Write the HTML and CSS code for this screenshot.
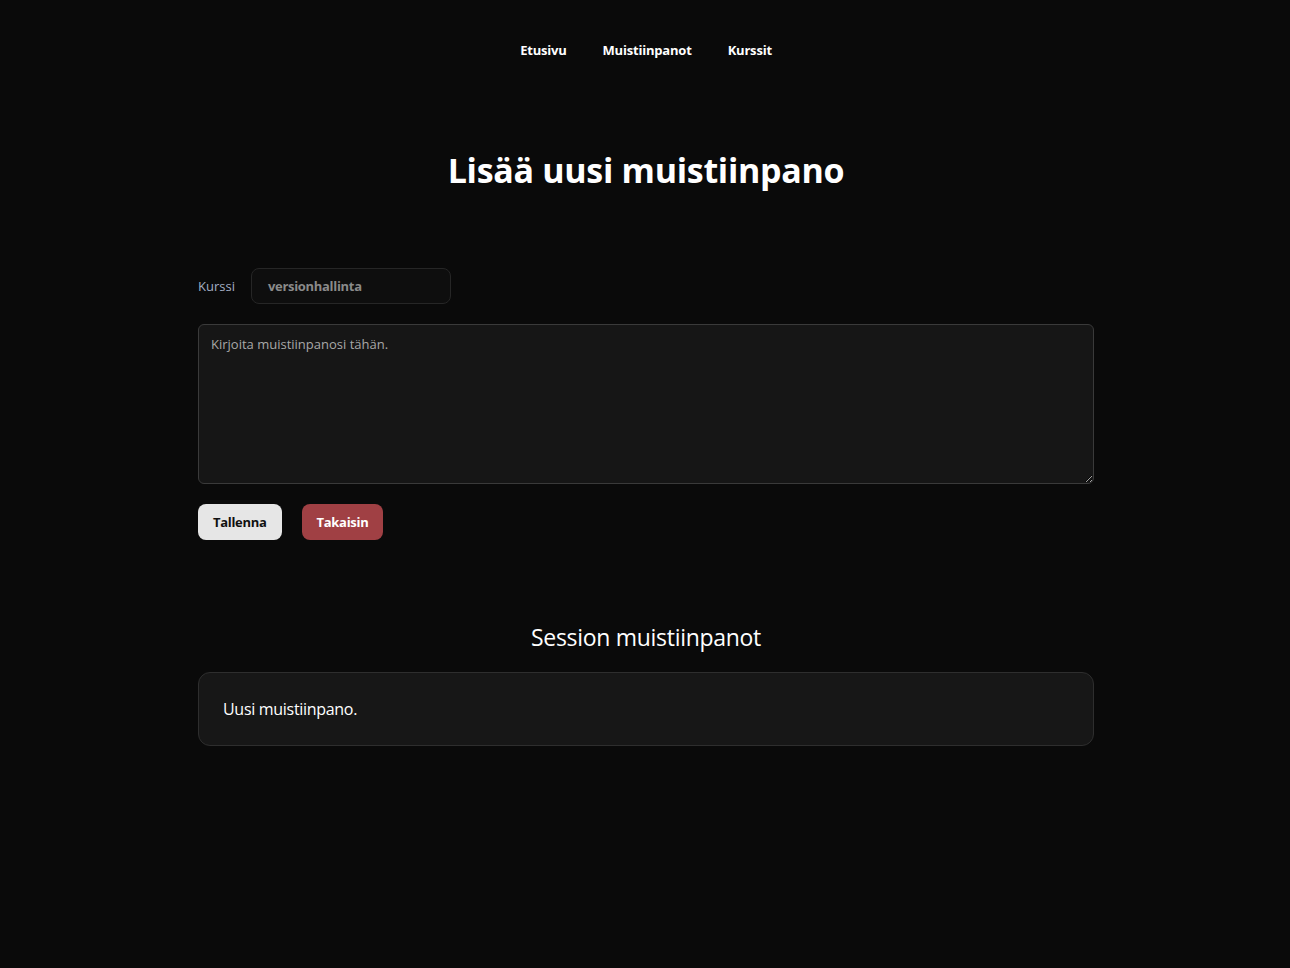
FILE: index.html
```html
<!DOCTYPE html>
<html lang="fi">
<head>
<meta charset="utf-8">
<title>Lisää uusi muistiinpano</title>
<link rel="stylesheet" href="styles.css">
</head>
<body>
<nav class="nav">
  <a href="#">Etusivu</a>
  <a href="#">Muistiinpanot</a>
  <a href="#">Kurssit</a>
</nav>
<main class="main">
  <h1 class="title">Lisää uusi muistiinpano</h1>
  <form class="form">
    <div class="row">
      <label class="label" for="kurssi">Kurssi</label>
      <div class="select" id="kurssi">versionhallinta</div>
    </div>
    <textarea class="area" placeholder="Kirjoita muistiinpanosi tähän."></textarea>
    <div class="buttons">
      <button type="button" class="btn btn-save">Tallenna</button>
      <button type="button" class="btn btn-back">Takaisin</button>
    </div>
  </form>
  <h2 class="subtitle">Session muistiinpanot</h2>
  <div class="card">Uusi muistiinpano.</div>
</main>
</body>
</html>
```
FILE: styles.css
```css
html, body {
  margin: 0;
  padding: 0;
  background: #0a0a0a;
  color: #ffffff;
  font-family: "Open Sans", "Noto Sans", sans-serif;
}
body {
  padding-left: 2px;
}
.nav {
  display: flex;
  justify-content: center;
  gap: 36px;
  padding-top: 40px;
  height: 20px;
}
.nav a {
  color: #fff;
  text-decoration: none;
  font-weight: 700;
  font-size: 13px;
  line-height: 20px;
  letter-spacing: -0.2px;
}
.main {
  width: 896px;
  margin: 0 auto;
}
.title {
  margin: 86px 0 0;
  text-align: center;
  font-size: 34px;
  line-height: 48px;
  font-weight: 700;
  letter-spacing: -0.3px;
}
.form {
  margin-top: 74px;
  display: flex;
  flex-direction: column;
  gap: 20px;
}
.row {
  display: flex;
  align-items: center;
  gap: 16px;
}
.label {
  color: #a3aec4;
  font-size: 13px;
}
.select {
  box-sizing: border-box;
  width: 200px;
  height: 36px;
  border: 1px solid #262626;
  border-radius: 8px;
  background: #0e0e0e;
  color: #8a8a8a;
  font-weight: 700;
  font-size: 13px;
  line-height: 34px;
  padding-left: 16px;
  letter-spacing: -0.3px;
}
.area {
  display: block;
  box-sizing: border-box;
  width: 896px;
  height: 160px;
  background: #161616;
  border: 1px solid #3a3a3a;
  border-radius: 6px;
  padding: 10px 12px;
  color: #ddd;
  font-family: "Open Sans", "Noto Sans", sans-serif;
  font-size: 13px;
  resize: vertical;
  outline: none;
}
.area::placeholder {
  color: #a8a8a8;
}
.buttons {
  display: flex;
  gap: 20px;
}
.btn {
  height: 36px;
  border: none;
  border-radius: 8px;
  padding: 0 15px;
  font-family: "Open Sans", "Noto Sans", sans-serif;
  font-weight: 700;
  font-size: 13px;
  letter-spacing: -0.3px;
}
.btn-save {
  background: #e6e6e6;
  color: #111;
}
.btn-back {
  background: #a04044;
  color: #fff;
}
.subtitle {
  margin: 79px 0 0;
  text-align: center;
  font-weight: 400;
  font-size: 23px;
  line-height: 36px;
  letter-spacing: -0.3px;
}
.card {
  margin-top: 17px;
  box-sizing: border-box;
  height: 74px;
  border: 1px solid #2e2e2e;
  border-radius: 12px;
  background: #171717;
  padding: 0 24px;
  display: flex;
  align-items: center;
  font-size: 16px;
  letter-spacing: -0.3px;
}
```
